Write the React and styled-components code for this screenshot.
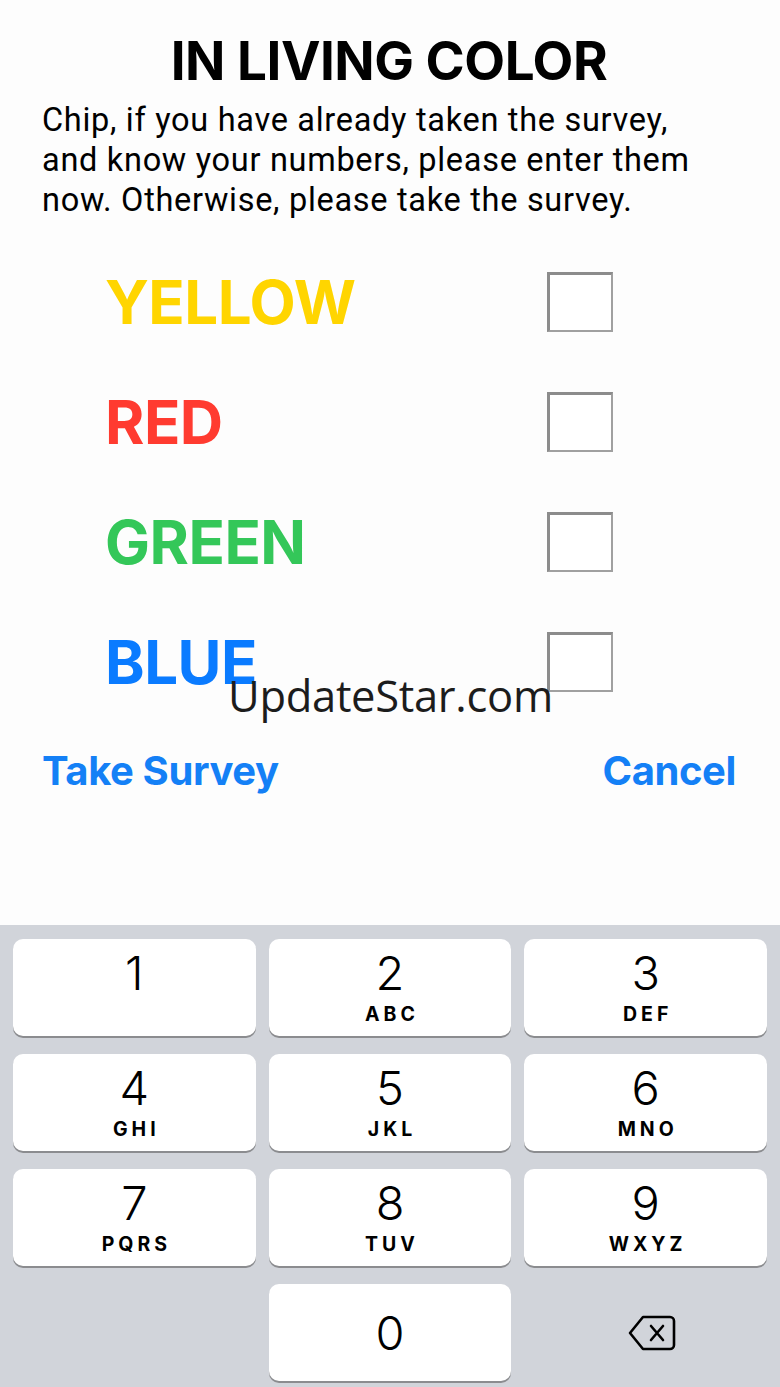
import React from "react";
import styled, { createGlobalStyle } from "styled-components";

const Global = createGlobalStyle`
  html, body { margin: 0; padding: 0; background: #fff; }
  body { font-family: Inter, "Noto Sans", sans-serif; -webkit-font-smoothing: antialiased; }
`;

const Page = styled.div`
  width: 780px;
  height: 1387px;
  display: flex;
  flex-direction: column;
  overflow: hidden;
  position: relative;
`;

const Content = styled.div`
  height: 925px;
  background: #fdfdfd;
  display: flex;
  flex-direction: column;
  padding: 0 44px 0 42px;
  box-sizing: border-box;
  position: relative;
`;

const Title = styled.h1`
  margin: 30px 0 0;
  text-align: center;
  font-size: 53px;
  font-weight: 700;
  line-height: 62px;
  color: #000;
  letter-spacing: -0.5px;
`;

const Intro = styled.p`
  margin: 8px 0 0;
  font-family: Roboto, "Noto Sans", sans-serif;
  font-size: 32.5px;
  letter-spacing: 0.7px;
  line-height: 40px;
  color: #000;
  font-weight: 400;
  white-space: nowrap;
`;

const Rows = styled.div`
  margin-top: 22px;
  display: flex;
  flex-direction: column;
`;

const Row = styled.div`
  height: 120px;
  display: grid;
  grid-template-columns: 442px 66px;
  align-items: center;
  padding-left: 63px;
`;

const ColorName = styled.span`
  font-size: 60px;
  font-weight: 700;
  color: ${(p) => p.$color};
  letter-spacing: -0.5px;
  line-height: 1;
`;

const Check = styled.div`
  width: 66px;
  height: 60px;
  box-sizing: border-box;
  background: #fff;
  border: 2px solid #8c8c8c;
  border-top-width: 3px;
  border-left-width: 3px;
  border-right-color: #a0a0a0;
  border-bottom-color: #a0a0a0;
`;

const Actions = styled.div`
  display: flex;
  justify-content: space-between;
  margin-top: 29px;
`;

const ActionButton = styled.button`
  border: none;
  background: none;
  padding: 0;
  font-family: inherit;
  font-size: 40px;
  font-weight: 700;
  color: #1480f6;
  letter-spacing: -0.4px;
  line-height: 1;
`;

const Watermark = styled.div`
  position: absolute;
  left: 228px;
  top: 670px;
  font-family: "Open Sans", "Noto Sans", sans-serif;
  font-size: 43.5px;
  font-weight: 400;
  color: #1c1c1c;
  letter-spacing: -0.3px;
  line-height: 1.2;
`;

const Keyboard = styled.div`
  flex: 1;
  background: #d1d4da;
  padding: 14px 13px 0;
  display: grid;
  grid-template-columns: repeat(3, 1fr);
  grid-auto-rows: 97px;
  column-gap: 13px;
  row-gap: 18px;
`;

const Key = styled.div`
  background: ${(p) => (p.$blank ? "transparent" : "#fff")};
  border-radius: 10px;
  box-shadow: ${(p) => (p.$blank ? "none" : "0 2px 0 #8b8c8f")};
  display: flex;
  flex-direction: column;
  align-items: center;
  justify-content: ${(p) => (p.$center ? "center" : "flex-start")};
  color: #000;
`;

const Digit = styled.span`
  font-family: Inter, "Noto Sans", sans-serif;
  font-size: 47px;
  font-weight: 300;
  line-height: 1;
  margin-top: ${(p) => (p.$center ? "0" : "10px")};
`;

const Letters = styled.span`
  font-size: 19.5px;
  font-weight: 700;
  letter-spacing: 4px;
  padding-left: 4px;
  margin-top: 9px;
  line-height: 1;
`;

const BackIcon = styled.svg`
  margin-left: 12px;
`;

const BackspaceIcon = () => (
  <BackIcon width="50" height="38" viewBox="0 0 50 38" fill="none">
    <path
      d="M16 3 H43 a4 4 0 0 1 4 4 V31 a4 4 0 0 1 -4 4 H16 L3 19 Z"
      stroke="#000"
      strokeWidth="2.6"
      strokeLinejoin="round"
    />
    <path d="M24 12 L36 26 M36 12 L24 26" stroke="#000" strokeWidth="2.6" strokeLinecap="round" />
  </BackIcon>
);

const colors = [
  { name: "YELLOW", color: "#ffd500" },
  { name: "RED", color: "#ff3b30" },
  { name: "GREEN", color: "#34c759" },
  { name: "BLUE", color: "#0a7bff" },
];

const keys = [
  ["1", ""],
  ["2", "ABC"],
  ["3", "DEF"],
  ["4", "GHI"],
  ["5", "JKL"],
  ["6", "MNO"],
  ["7", "PQRS"],
  ["8", "TUV"],
  ["9", "WXYZ"],
];

export default function App() {
  return (
    <Page>
      <Global />
      <Content>
        <Title>IN LIVING COLOR</Title>
        <Intro>
          Chip, if you have already taken the survey,
          <br />
          and know your numbers, please enter them
          <br />
          now. Otherwise, please take the survey.
        </Intro>
        <Rows>
          {colors.map((c) => (
            <Row key={c.name}>
              <ColorName $color={c.color}>{c.name}</ColorName>
              <Check />
            </Row>
          ))}
        </Rows>
        <Actions>
          <ActionButton>Take Survey</ActionButton>
          <ActionButton>Cancel</ActionButton>
        </Actions>
        <Watermark>UpdateStar.com</Watermark>
      </Content>
      <Keyboard>
        {keys.map(([d, l]) => (
          <Key key={d}>
            <Digit>{d}</Digit>
            {l && <Letters>{l}</Letters>}
          </Key>
        ))}
        <Key $blank />
        <Key $center>
          <Digit $center>0</Digit>
        </Key>
        <Key $blank $center>
          <BackspaceIcon />
        </Key>
      </Keyboard>
    </Page>
  );
}
